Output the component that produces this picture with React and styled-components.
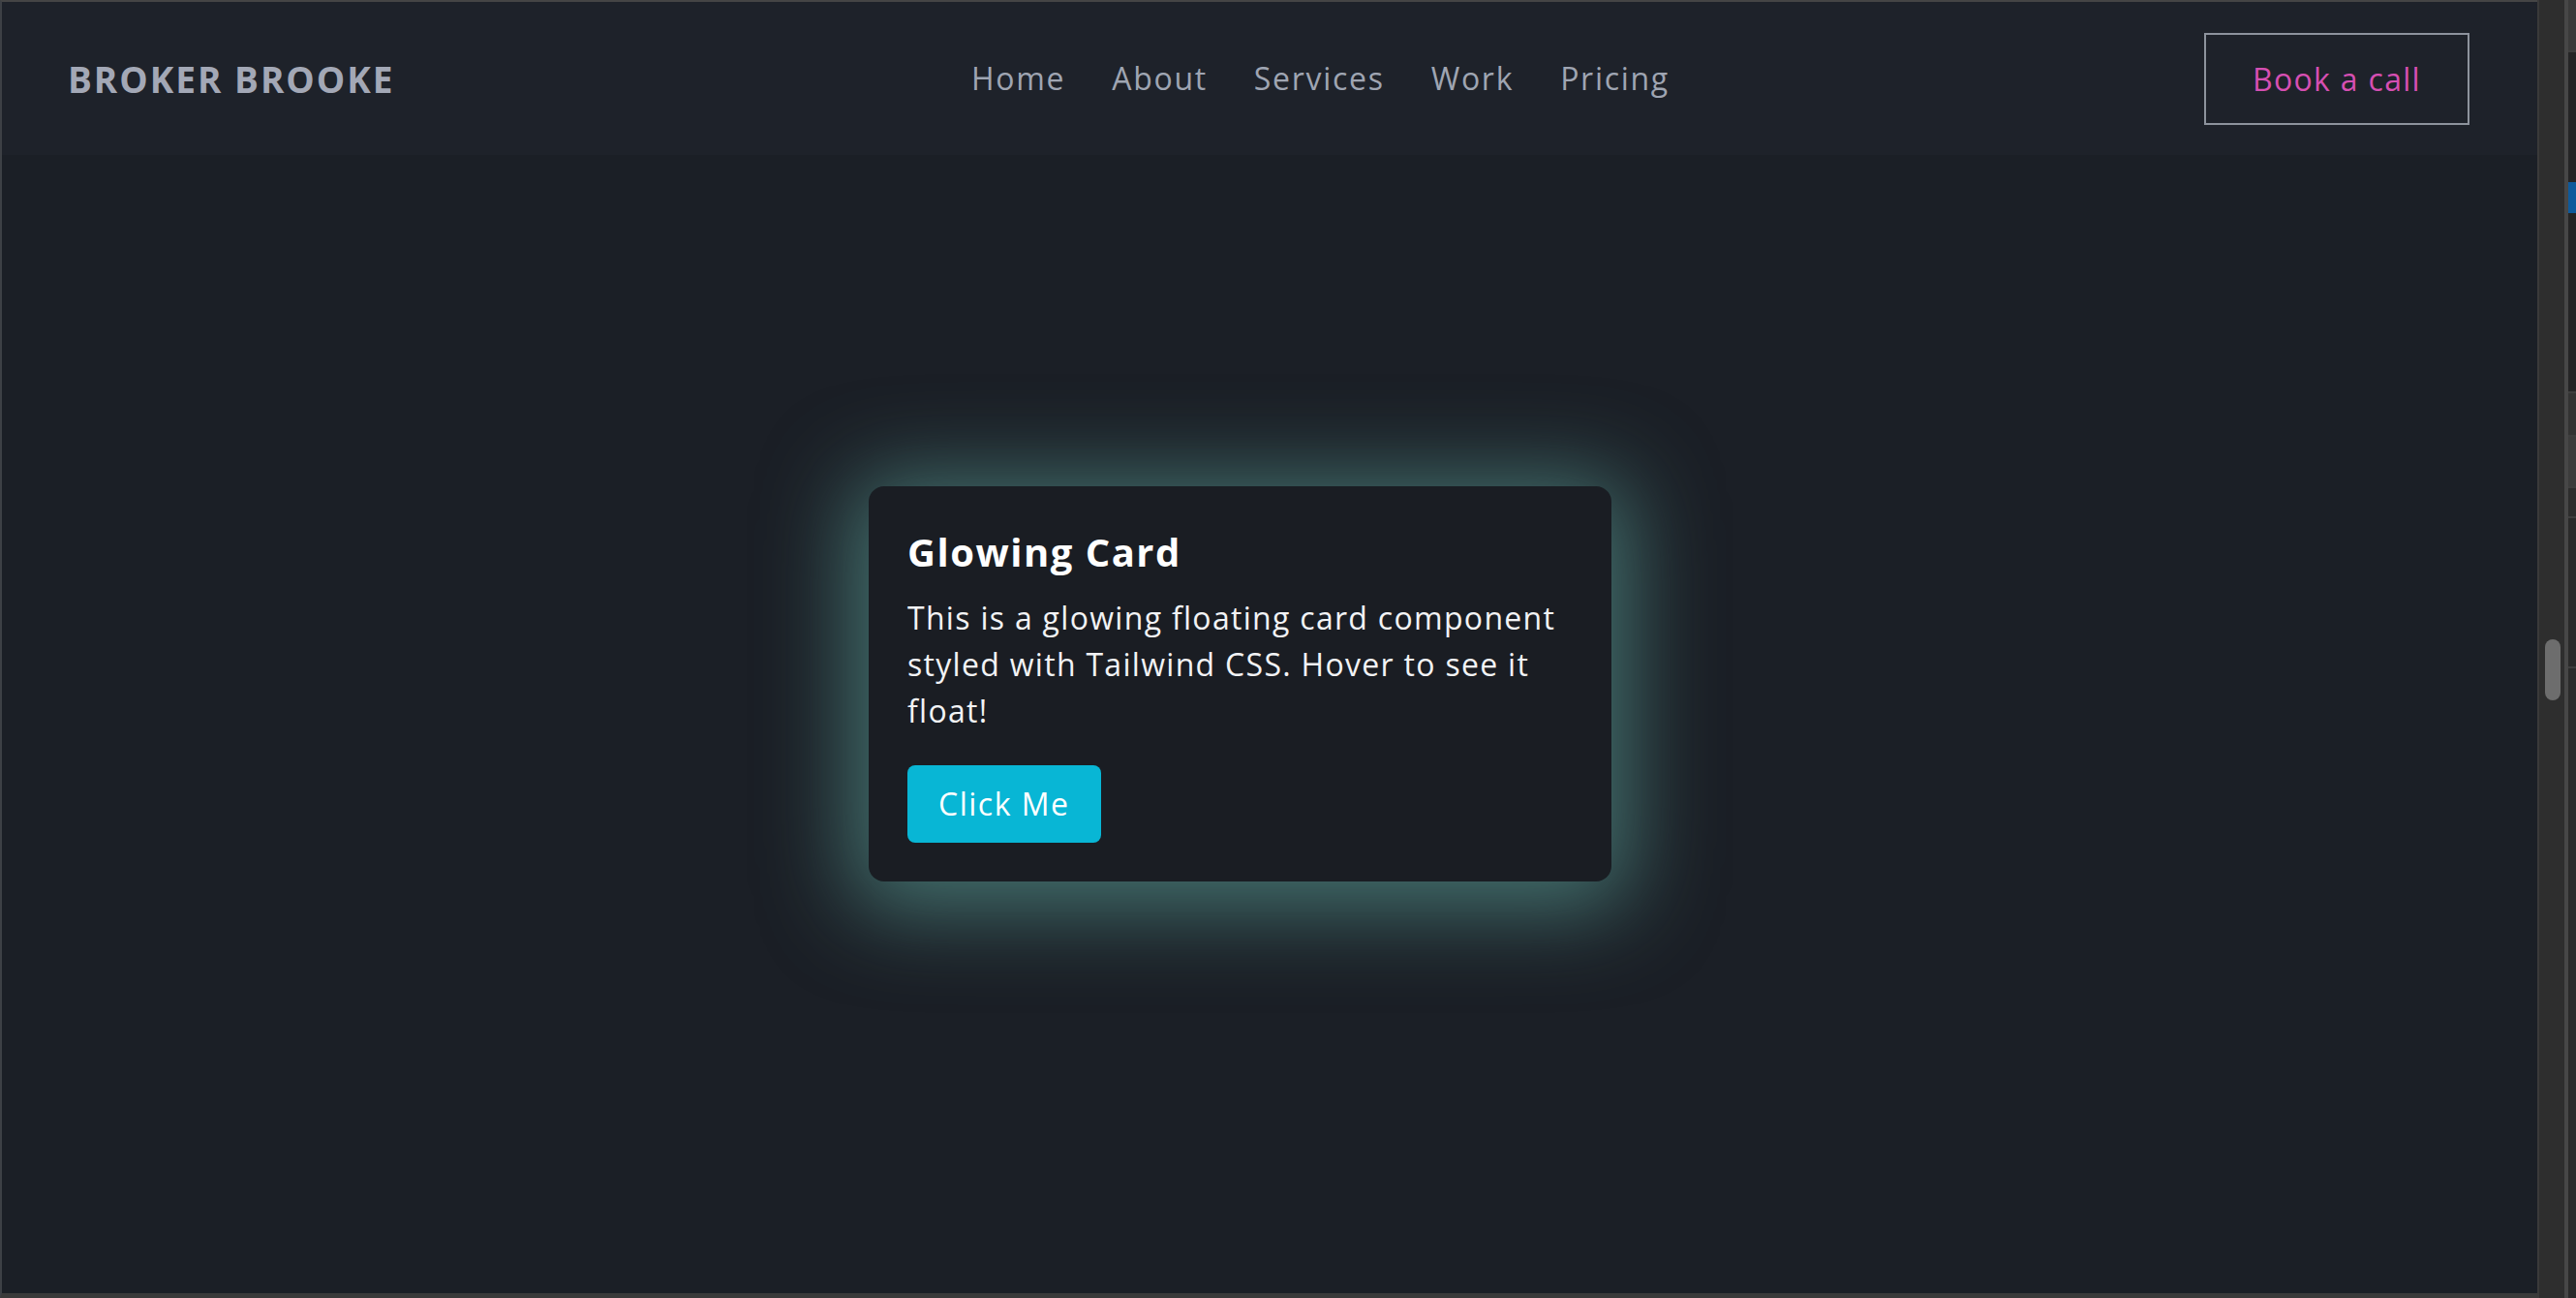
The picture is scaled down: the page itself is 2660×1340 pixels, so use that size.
import React from 'react';
import styled, { createGlobalStyle } from 'styled-components';

const GlobalStyle = createGlobalStyle`
  html, body {
    margin: 0;
    padding: 0;
    background: #2c2c2c;
    overflow: hidden;
  }
  * {
    box-sizing: border-box;
  }
`;

const font = `'Open Sans', 'Noto Sans', 'DejaVu Sans', sans-serif`;

const Window = styled.div`
  display: flex;
  width: 2660px;
  height: 1340px;
  background: #2c2c2c;
`;

const Viewport = styled.div`
  width: 2620px;
  height: 1340px;
  display: flex;
  flex-direction: column;
  background: #1b1f26;
  border-top: 2px solid #454545;
  border-left: 2px solid #3d4045;
  border-bottom: 5px solid #3a3a3a;
  font-family: ${font};
  overflow: hidden;
`;

const Header = styled.header`
  height: 158px;
  flex-shrink: 0;
  display: grid;
  grid-template-columns: 933px auto 1fr;
  align-items: center;
  padding: 0 70px 0 68px;
  background: #1e222a;
`;

const Logo = styled.div`
  font-size: 37px;
  font-weight: 700;
  color: #a3a8b6;
  letter-spacing: 2px;
`;

const Nav = styled.nav`
  display: flex;
  gap: 48px;
`;

const NavLink = styled.a`
  font-size: 32px;
  line-height: 48px;
  color: #9fa5b2;
  text-decoration: none;
  letter-spacing: 1.7px;
`;

const BookButton = styled.a`
  justify-self: end;
  display: inline-block;
  padding: 20px 48px;
  font-size: 32px;
  line-height: 51px;
  color: #d64fb2;
  border: 2px solid #8d939d;
  text-decoration: none;
  letter-spacing: 1.3px;
`;

const Main = styled.main`
  flex: 1;
  padding: 342px 0 0 895px;
`;

const Card = styled.div`
  width: 767px;
  padding: 40px 40px;
  background: #1a1d23;
  border-radius: 16px;
  box-shadow: 0 10px 90px 18px rgba(96, 172, 162, 0.6);
`;

const Title = styled.h2`
  margin: 0 0 16px;
  font-size: 40px;
  line-height: 56px;
  font-weight: 700;
  color: #ffffff;
  letter-spacing: 1.5px;
`;

const Text = styled.p`
  margin: 0 0 32px;
  font-size: 32px;
  line-height: 48px;
  color: #f2f3f5;
  letter-spacing: 1.3px;
`;

const ActionButton = styled.button`
  display: inline-block;
  height: 80px;
  padding: 0 32px;
  border: none;
  border-radius: 8px;
  background: #08b6d5;
  color: #ffffff;
  font-family: ${font};
  font-size: 32px;
  line-height: 48px;
  letter-spacing: 1.5px;
  cursor: pointer;
`;

const ScrollTrack = styled.div`
  width: 28px;
  height: 1340px;
  padding: 660px 0 0 6px;
  background: #2e2e2e;
  border-left: 2px solid #3a3a3a;
`;

const Thumb = styled.div`
  width: 16px;
  height: 63px;
  border-radius: 8px;
  background: #6d6d6d;
`;

const Divider = styled.div`
  width: 4px;
  height: 1340px;
  background: #474747;
`;

const SidePanel = styled.div`
  width: 8px;
  height: 1340px;
  display: flex;
  flex-direction: column;
  background: #2a2a2a;
`;

const PanelBlock = styled.div`
  height: ${(p) => p.h}px;
  background: ${(p) => p.bg};
  border-bottom: ${(p) => (p.line ? '2px solid #3e3e3e' : 'none')};
  flex-shrink: 0;
`;

const navItems = ['Home', 'About', 'Services', 'Work', 'Pricing'];

export default function App() {
  return (
    <>
      <GlobalStyle />
      <Window>
        <Viewport>
          <Header>
            <Logo>BROKER BROOKE</Logo>
            <Nav>
              {navItems.map((item) => (
                <NavLink key={item} href="#">
                  {item}
                </NavLink>
              ))}
            </Nav>
            <BookButton href="#">Book a call</BookButton>
          </Header>
          <Main>
            <Card>
              <Title>Glowing Card</Title>
              <Text>
                This is a glowing floating card component styled with Tailwind CSS. Hover to see it float!
              </Text>
              <ActionButton>Click Me</ActionButton>
            </Card>
          </Main>
        </Viewport>
        <ScrollTrack>
          <Thumb />
        </ScrollTrack>
        <Divider />
        <SidePanel>
          <PanelBlock h={54} bg="#3a3a3a" line />
          <PanelBlock h={134} bg="#252526" />
          <PanelBlock h={32} bg="#0e5a9c" />
          <PanelBlock h={186} bg="#252526" line />
          <PanelBlock h={45} bg="#333333" line />
          <PanelBlock h={53} bg="#3c3c3c" line />
          <PanelBlock h={31} bg="#2d2d2d" line />
          <PanelBlock h={155} bg="#2a2a2a" line />
          <PanelBlock h={600} bg="#2b2b2b" />
        </SidePanel>
      </Window>
    </>
  );
}
